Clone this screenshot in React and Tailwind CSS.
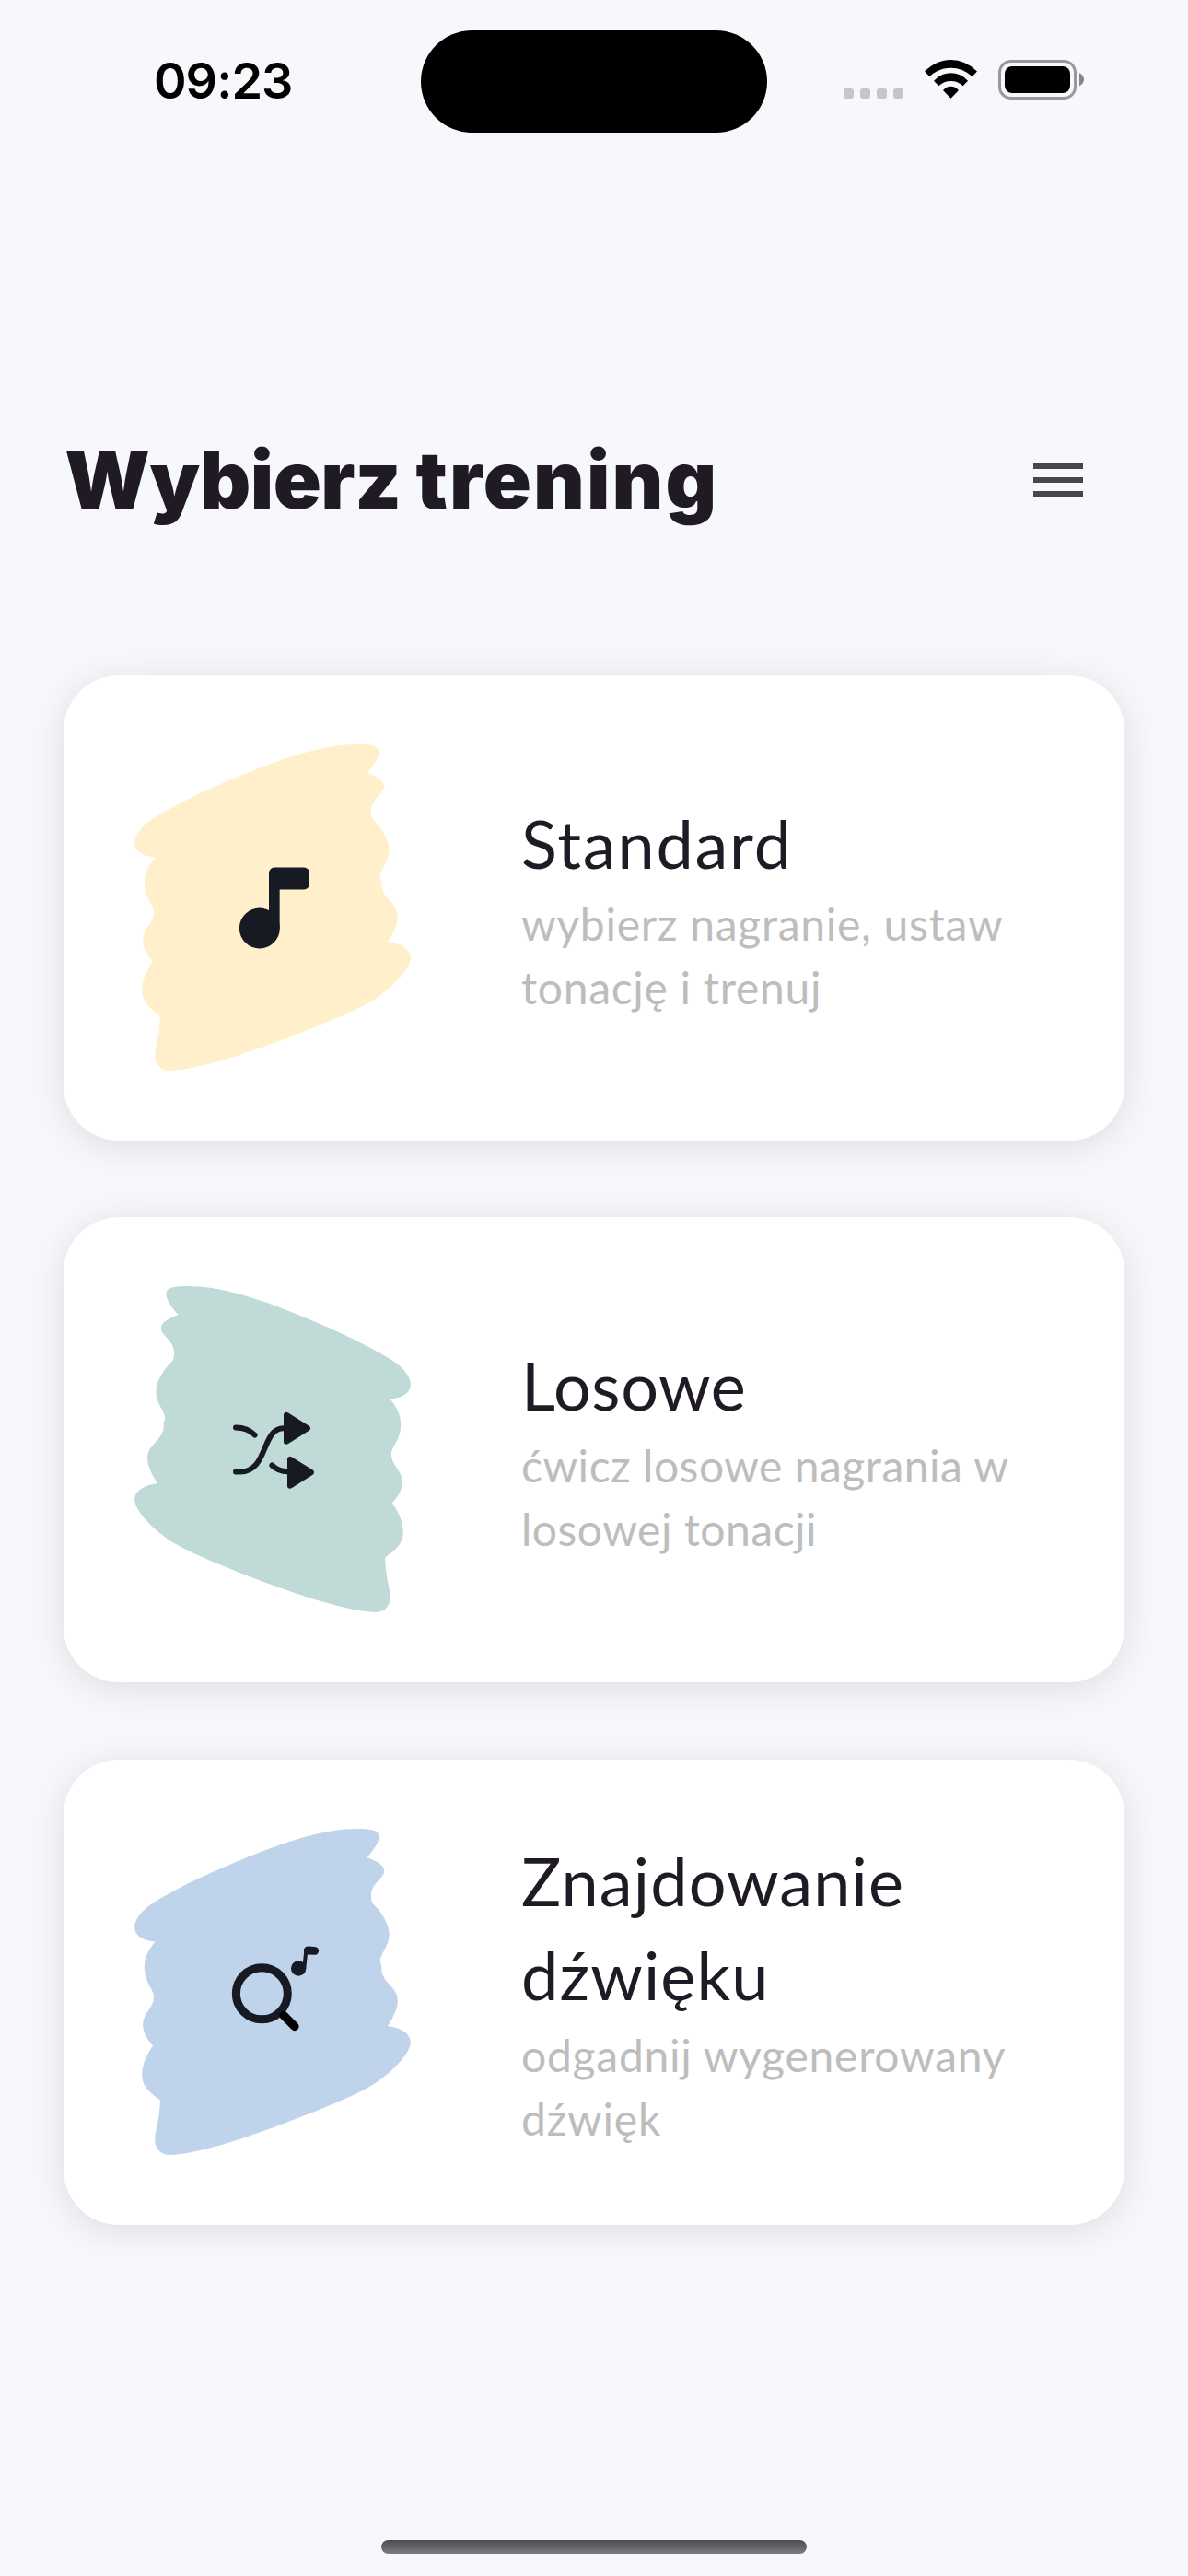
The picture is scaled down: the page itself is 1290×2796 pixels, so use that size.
const BLOB =
  "M875 108C876 125 858 152 836 176C860 185 895 200 892 223C889 245 849 262 849 300C849 318 852 325 862 334C885 360 908 392 908 428C908 465 879 490 879 514C879 520 883 525 883 532C880 585 936 595 936 643C936 670 920 700 903 726C945 730 978 750 978 778C978 815 915 880 850 920C780 962 640 1015 530 1057C400 1105 260 1146 190 1146C160 1146 144 1120 144 1098C144 1070 160 1035 161 968C150 955 102 935 102 885C102 850 120 815 138 790C125 775 105 752 105 720C105 685 141 665 141 632C141 605 110 585 110 535C110 500 125 475 145 451C110 447 78 435 78 402C78 375 110 340 145 320C240 262 380 200 500 154C620 110 710 84 800 83C850 83 874 86 875 108Z";

function NoteIcon() {
  return (
    <g fill="#171923">
      <circle cx="485.5" cy="682" r="66" />
      <path d="M516 502a18 18 0 0 1 18-18h96a18 18 0 0 1 18 18v36a18 18 0 0 1-18 18h-79v126h-35z" />
    </g>
  );
}

function ShuffleIcon() {
  return (
    <g fill="none" stroke="#171923" strokeWidth="18" strokeLinecap="round" strokeLinejoin="round">
      <path d="M408 544c24 0 45 7 62 24M408 688h14c92 0 69-142 142-142M526 667c14 13 29 20 50 20" />
      <path fill="#171923" d="M573 503v87l69-44zM585 647v87l69-44z" />
    </g>
  );
}

function SearchNoteIcon() {
  return (
    <g>
      <circle cx="493" cy="620" r="84" fill="none" stroke="#171923" strokeWidth="27" />
      <path d="M564 691l36 36" stroke="#000" strokeWidth="28" strokeLinecap="round" />
      <circle cx="612.500" cy="538" r="24.500" fill="#171923" />
      <path d="M631 538l6-58h28" fill="none" stroke="#171923" strokeWidth="12" />
      <path d="M643 479.500l22 1" stroke="#171923" strokeWidth="27" strokeLinecap="round" />
    </g>
  );
}

const CARDS = [
  {
    title: "Standard",
    titleClass: "tracking-[1.8px]",
    text: "wybierz nagranie, ustaw tonację i trenuj",
    textClass: "tracking-[0.7px]",
    color: "#fff0cb",
    Icon: NoteIcon,
  },
  {
    title: "Losowe",
    titleClass: "tracking-[0.6px]",
    text: "ćwicz losowe nagrania w losowej tonacji",
    textClass: "tracking-[0.5px]",
    color: "#bfdad7",
    mirrored: true,
    Icon: ShuffleIcon,
  },
  {
    title: "Znajdowanie dźwięku",
    titleClass: "tracking-[1.15px]",
    text: "odgadnij wygenerowany dźwięk",
    textClass: "tracking-[0.75px]",
    color: "#bfd4ea",
    Icon: SearchNoteIcon,
  },
];

function Card({ title, titleClass, text, textClass, color, mirrored, Icon }) {
  return (
    <article className="flex h-[505px] items-center rounded-[60px] bg-white pl-[77px] shadow-[0_6px_40px_rgba(0,0,0,0.11)]">
      <svg className="mb-[1px] h-[354px] w-[300px] shrink-0" viewBox="78 83 900 1063">
        <path d={BLOB} fill={color} transform={mirrored ? "translate(1056 0) scale(-1 1)" : undefined} />
        <Icon />
      </svg>
      <div className="ml-[120px] w-[540px] font-['Lato',sans-serif]">
        <h2 className={`-mt-[1px] pb-[2px] text-[72px] leading-[102px] text-[#1f1a24] ${titleClass}`}>{title}</h2>
        <p className={`text-[48px] leading-[69px] text-[#bdbdbd] ${textClass}`}>{text}</p>
      </div>
    </article>
  );
}

function StatusBar() {
  return (
    <header className="flex h-[144px] items-start">
      <time className="ml-[167px] mt-[55px] w-[290px] font-['Inter',sans-serif] text-[54px] font-semibold leading-[66px] tracking-[-1px] text-black">09:23</time>
      <div className="mt-[33px] h-[111px] w-[376px] rounded-full bg-black" />
      <div className="ml-[83px] mt-[96px] flex gap-[7px]">
        <i className="size-[11px] rounded-[3px] bg-[#c6c6c8]" />
        <i className="size-[11px] rounded-[3px] bg-[#c6c6c8]" />
        <i className="size-[11px] rounded-[3px] bg-[#c6c6c8]" />
        <i className="size-[11px] rounded-[3px] bg-[#c6c6c8]" />
      </div>
      <svg className="ml-[23px] mt-[65px] h-[42px] w-[57px]" viewBox="0 0 171 126">
        <path d="M0 37.500Q38 0 85.500 0T171 37.500L155 54Q124 26 85.500 26T16 54zM30 68Q54 43 85.500 43T141 68L125 85Q108 69 85.500 69T46 85zM60 99Q71 86 85.500 86T111 99L85.500 125z" />
      </svg>
      <svg className="ml-[23px] mt-[65px] h-[43px] w-[93px]" viewBox="0 0 279 129">
        <rect x="4.500" y="4.500" width="246" height="120" rx="37" fill="none" stroke="#98999b" strokeWidth="9" />
        <rect x="21" y="21" width="213" height="87" rx="24" />
        <path d="M264 43c20 8 20 34 0 42z" fill="#858688" />
      </svg>
    </header>
  );
}

export default function App() {
  return (
    <div className="flex h-[2796px] w-[1290px] flex-col bg-[#f7f8fc]">
      <StatusBar />
      <div className="mt-[317px] flex h-[120px] items-center justify-between pl-[70px] pr-[105px]">
        <h1 className="whitespace-nowrap font-['Inter',sans-serif] text-[86px] font-black leading-[120px] tracking-[2.1px] [word-spacing:-3px] text-[#1f1a24]">
          <span className="tracking-[-0.5px]">Wybierz</span> trening
        </h1>
        <svg className="size-[72px]" viewBox="0 0 24 24" fill="#49454d">
          <path d="M3 6h18v2H3zM3 11h18v2H3zM3 16h18v2H3z" />
        </svg>
      </div>
      <main className="mt-[151.67px] flex flex-col gap-[83.67px] px-[69px]">
        {CARDS.map((card) => (
          <Card key={card.title} {...card} />
        ))}
      </main>
      <div className="mb-[24px] mt-auto h-[15px] w-[462px] self-center rounded-full bg-linear-to-b from-[#4b4c4e] to-[#7d7e80]" />
    </div>
  );
}
